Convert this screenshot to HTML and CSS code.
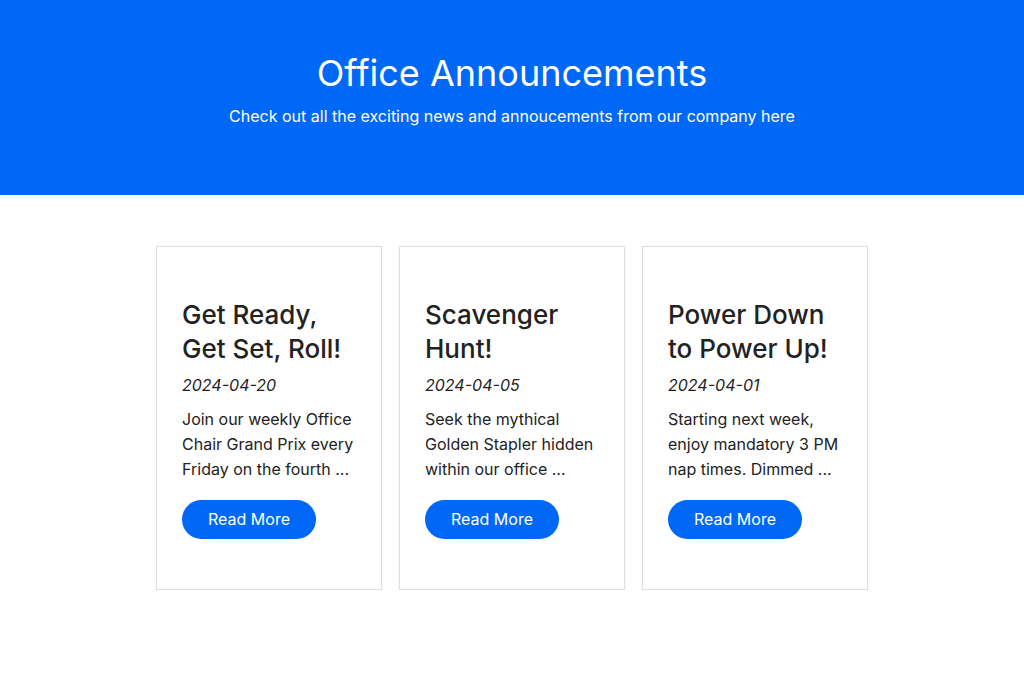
FILE: index.html
```html
<!DOCTYPE html>
<html lang="en">
<head>
<meta charset="utf-8">
<title>Office Announcements</title>
<link rel="stylesheet" href="styles.css">
</head>
<body>
<header class="hero">
  <h1 class="hero-title">Office Announcements</h1>
  <p class="hero-sub">Check out all the exciting news and annoucements from our company here</p>
</header>
<main class="cards">
  <article class="card">
    <h2 class="card-title">Get Ready, Get Set, Roll!</h2>
    <p class="card-date">2024-04-20</p>
    <p class="card-text">Join our weekly Office Chair Grand Prix every Friday on the fourth ...</p>
    <a class="btn" href="#">Read More</a>
  </article>
  <article class="card">
    <h2 class="card-title">Scavenger Hunt!</h2>
    <p class="card-date">2024-04-05</p>
    <p class="card-text">Seek the mythical Golden Stapler hidden within our office ...</p>
    <a class="btn" href="#">Read More</a>
  </article>
  <article class="card">
    <h2 class="card-title">Power Down to Power Up!</h2>
    <p class="card-date">2024-04-01</p>
    <p class="card-text">Starting next week, enjoy mandatory 3 PM nap times. Dimmed ...</p>
    <a class="btn" href="#">Read More</a>
  </article>
</main>
</body>
</html>
```
FILE: styles.css
```css
* { box-sizing: border-box; }
html, body { margin: 0; padding: 0; }
body {
  font-family: Inter, "Noto Sans", "Liberation Sans", sans-serif;
  color: #222;
  background: #fff;
}
.hero {
  background: #0068f7;
  color: #fff;
  height: 195px;
  text-align: center;
  padding-top: 51px;
}
.hero-title {
  margin: 0;
  font-size: 36px;
  font-weight: 400;
  line-height: 44px;
}
.hero-sub {
  margin: 10px 0 0;
  font-size: 16px;
  line-height: 22px;
}
.cards {
  display: flex;
  justify-content: center;
  gap: 17px;
  padding-top: 51px;
}
.card {
  width: 226px;
  height: 344px;
  border: 1px solid #dedede;
  box-shadow: 0 1px 3px rgba(0,0,0,0.06);
  padding: 51px 25px 50px;
}
.card-title {
  margin: 0;
  font-size: 26px;
  font-weight: 500;
  line-height: 34px;
  color: #222;
}
.card-date {
  margin: 7px 0 0;
  font-size: 16px;
  font-style: italic;
  line-height: 24px;
}
.card-text {
  margin: 10px 0 0;
  font-size: 16px;
  line-height: 25px;
}
.btn {
  display: inline-block;
  margin-top: 18px;
  width: 134px;
  height: 39px;
  line-height: 39px;
  border-radius: 20px;
  background: #0068f7;
  color: #fff;
  text-align: center;
  text-decoration: none;
  font-size: 16px;
}
```
